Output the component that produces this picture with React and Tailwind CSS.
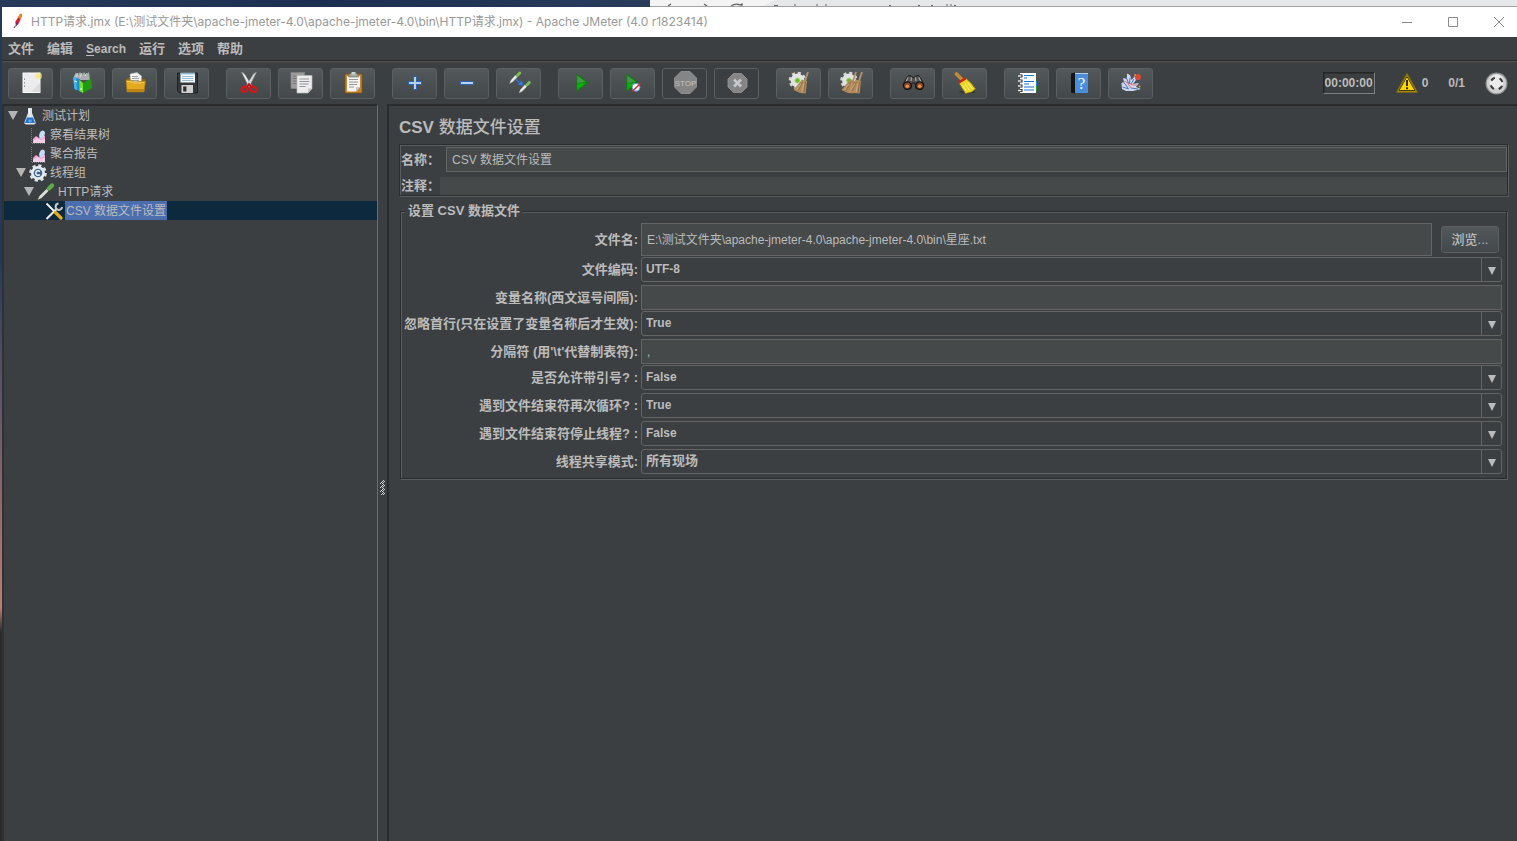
import { useState } from "react";

const Gear = ({ cx }) => (
  <g>
    <circle cx={cx} cy="9.5" r="7.5" fill="none" stroke="#d6d6d6" strokeWidth="2.6" strokeDasharray="3.1 2.79" />
    <circle cx={cx} cy="9.5" r="6.9" fill="#e2e2e2" />
    <circle cx={cx} cy="9.5" r="2.6" fill="#5fc417" stroke="#b9d7a2" />
  </g>
);

const Brush = ({ x }) => (
  <g transform={`translate(${x} 0)`}>
    <path d="M21 1 L18 10" stroke="#b3946a" strokeWidth="1.8" />
    <path d="M15 8.5 L20 10 L18.7 22.5 L13 22 L6.500 19 Z" fill="#b18a5d" />
    <path d="M15.500 11 L11 20 M18.5 11 L17 21.5" stroke="#80603a" strokeWidth=".7" />
    <path d="M14 13 L9.5 19 M17 12 L15 21" stroke="#d4b588" strokeWidth=".8" />
  </g>
);

const Dropper = () => (
  <g>
    <path d="M0 12 L1.500 8.500 L6.500 3 L8.500 5 L3 10.500 Z" fill="#eceeea" stroke="#8d938b" strokeWidth=".4" />
    <path d="M6 2.800 L9 5.800" stroke="#35522c" strokeWidth="1.2" />
    <path d="M7.800 4 L10.300 1.500" stroke="#7fbf5a" strokeWidth="2.8" strokeLinecap="round" />
  </g>
);

const icons = {
  new: (
    <>
      <rect x="4" y="2" width="17" height="19.5" fill="#ececec" stroke="#fafafa" />
      <path d="M5.5 7.5v1.5M5.5 11v1.5M5.5 14.5v1.5" stroke="#8a8a8a" />
      <path d="M12 21 L21 12 V21 Z" fill="#dcdcdc" />
      <circle cx="19.5" cy="5" r="3.6" fill="#f3e98a" opacity=".6" />
      <circle cx="19.5" cy="5" r="1.8" fill="#f7ec5c" />
    </>
  ),
  templates: (
    <>
      <path d="M3 5 L5 1.5 L7 4 L9 1 L11 4 L13 1 L15 4 L18 1 L19 9 H3 Z" fill="#a9adad" />
      <path d="M5 6 L7 2 M9 6 L11 2 M14 5 L16 2" stroke="#e9e9e9" strokeWidth=".9" />
      <path d="M2 6 L9 8 L10 21 L3.5 18 Z" fill="#1b8fd6" />
      <path d="M2 6 L5 7 L6 19 L3.5 18 Z" fill="#45b4ee" />
      <path d="M8.500 9 L12 12 L12 22 L8.5 20 Z" fill="#72e326" />
      <path d="M12 12 L20 7.5 L21 17 L12 22 Z" fill="#219a12" />
      <path d="M3.5 10 L6 11 M9.500 18 h1.6" stroke="#fff" strokeWidth="1.3" />
    </>
  ),
  open: (
    <>
      <path d="M3 8 L7 6 L22 8 L21 20 L5 20 Z" fill="#8b6510" />
      <path d="M7 3 L14 1.5 L18.5 5 L18 14 L8 13 Z" fill="#f3f3f3" stroke="#bdbdbd" strokeWidth=".5" />
      <path d="M9 5.5h6M9 7.5h7M9 9.5h7" stroke="#8b8b8b" strokeWidth=".8" />
      <path d="M3 9 L9 9.5 L11 11 L22.5 10 L21 21 L4 21 Z" fill="#e3a91f" stroke="#aa7a10" strokeWidth=".6" />
      <path d="M4 10.5 L9 10.8 L11 12.2 L21 11.5" stroke="#f6d06a" fill="none" />
      <path d="M4 18h17.3L21 21H4.2z" fill="#bf8413" />
    </>
  ),
  save: (
    <>
      <path d="M2.5 2h20v20H4.5l-2-2z" fill="#34373a" stroke="#191a1b" strokeWidth=".8" />
      <rect x="5.5" y="1.8" width="14.5" height="9.7" fill="#f5f8fb" />
      <rect x="5.5" y="1.8" width="14.5" height="1.6" fill="#8fb8d8" />
      <path d="M7 5.5h11.5M7 7.5h11.5M7 9.5h11.5" stroke="#7facd1" strokeWidth=".8" />
      <rect x="6.5" y="14" width="11.5" height="8" fill="#cfcfcf" />
      <rect x="8.2" y="15.5" width="3.2" height="5" fill="#2b2d2e" />
    </>
  ),
  cut: (
    <>
      <path d="M4.5 1 L7.500 3 L15 15 L12 16 Z" fill="#eeeeee" stroke="#9d9d9d" strokeWidth=".5" />
      <path d="M19.5 1 L16.500 3 L9 15 L12 16 Z" fill="#d9dada" stroke="#9d9d9d" strokeWidth=".5" />
      <ellipse cx="7.5" cy="18.3" rx="3.2" ry="2.4" fill="none" stroke="#d81616" strokeWidth="2.2" transform="rotate(-25 7.5 18.3)" />
      <ellipse cx="16.5" cy="18.3" rx="3.2" ry="2.4" fill="none" stroke="#d81616" strokeWidth="2.2" transform="rotate(25 16.5 18.3)" />
      <path d="M9.5 16 L12 13.5 L14.5 16" stroke="#c41212" strokeWidth="2.4" fill="none" />
    </>
  ),
  copy: (
    <>
      <rect x="2" y="1.5" width="13.5" height="16" fill="#9c9c9c" stroke="#858585" strokeWidth=".7" />
      <path d="M4 5h9M4 7.5h4M4 10h4M4 12.5h4" stroke="#727272" strokeWidth=".8" />
      <path d="M8 4.5h15v13L19 22H8z" fill="#ededed" stroke="#b9b9b9" strokeWidth=".7" />
      <path d="M10.5 8h9.5M10.5 10.5h10M10.5 13h9M10.5 15.5h6" stroke="#8e8e8e" strokeWidth=".9" />
      <path d="M19 22v-4.5h4z" fill="#c4c4c4" />
    </>
  ),
  paste: (
    <>
      <rect x="4" y="3" width="17" height="19" rx="1" fill="#c4882a" stroke="#7d5210" strokeWidth=".8" />
      <path d="M6 5h13v11l-4 4.5H6z" fill="#f5f5f5" />
      <path d="M15 20.5V16h4z" fill="#c3c3c3" />
      <path d="M8 8.5h9M8 11h9M8 13.5h8M8 16h5" stroke="#8b8b8b" strokeWidth=".9" />
      <path d="M8.5 2.5h8l1 3.5h-10z" fill="#a4a6a2" stroke="#5d5f5b" strokeWidth=".6" />
      <rect x="10.5" y="1" width="4" height="2.5" fill="#cfd1cd" />
    </>
  ),
  expand: (
    <>
      <path d="M12 5v14M5 12h14" stroke="#2f63ad" strokeWidth="4" />
      <path d="M12 6v12M6 12h12" stroke="#b4d2f3" strokeWidth="2" />
    </>
  ),
  collapse: (
    <>
      <path d="M5 12h14" stroke="#2f63ad" strokeWidth="4" />
      <path d="M6 12h12" stroke="#b4d2f3" strokeWidth="2" />
    </>
  ),
  toggle: (
    <>
      <g transform="translate(2.5 0.5)"><Dropper /></g>
      <g transform="translate(12 10)"><Dropper /></g>
      <path d="M9.5 8.500 L13 12" stroke="#2c7be8" strokeWidth="1.6" strokeDasharray="1.5 .7" />
      <path d="M16 14.500 L10.500 13.500 L15 9.500 Z" fill="#2c7be8" />
    </>
  ),
  start: (
    <>
      <path d="M7.5 2.5 L19.500 11.5 L7.5 21 Z" fill="#0a7f0a" />
      <path d="M8.2 4.5 L17 11 L8.2 12 Z" fill="#3f9a43" />
      <path d="M8.2 12.500 L17 12 L8.2 19 Z" fill="#08b408" />
    </>
  ),
  startNoPause: (
    <>
      <path d="M5.5 2.5 L17.5 11.5 L5.5 21 Z" fill="#0a7f0a" />
      <path d="M6.2 4.5 L15 11 L6.2 12 Z" fill="#3f9a43" />
      <path d="M6.2 12.500 L15 12 L6.2 19 Z" fill="#08b408" />
      <circle cx="15" cy="16.3" r="4" fill="#eef4ff" stroke="#5d8cc9" strokeWidth="1" />
      <path d="M11 20.500 L19.5 12.5" stroke="#d92b2b" strokeWidth="1.5" />
    </>
  ),
  stop: (
    <>
      <path d="M8 .5h9l6.5 6.5v9L17 22.5H8L1.5 16V7z" fill="#858585" stroke="#979797" strokeWidth=".8" />
      <text x="12.500" y="15" textAnchor="middle" fontSize="8" fill="#c2c2c2" fontFamily="Liberation Sans, sans-serif">STOP</text>
    </>
  ),
  shutdown: (
    <>
      <path d="M8.5 2.5h8l5.5 5.5v8l-5.5 5.5h-8L3 16V8z" fill="#858585" stroke="#979797" strokeWidth=".8" />
      <path d="M9 8.500l7 7M16 8.500l-7 7" stroke="#c8c8c8" strokeWidth="2.6" />
    </>
  ),
  clear: (
    <>
      <Gear cx="10.5" />
      <Brush x="0" />
    </>
  ),
  clearAll: (
    <>
      <Gear cx="10" />
      <Brush x="-4" />
      <Brush x="2" />
    </>
  ),
  search: (
    <>
      <path d="M5.500 7 L7.500 4.500 L10.500 5 L12.5 7 L14.500 5 L17.500 4.5 L19.500 7 L23 14 L20.500 18.500 L15 17.500 L14 12 H11 L10 17.500 L4.500 18.500 L2 14 Z" fill="#505050" stroke="#161616" strokeWidth=".9" />
      <path d="M7 6.500 L5 11 M18 6.500 L20 11 M10.500 6.500 L10 10 M14.500 6.500 L15 10" stroke="#ababab" strokeWidth="1.2" />
      <circle cx="6.3" cy="14.6" r="3.8" fill="#84451f" stroke="#111" strokeWidth="1.2" />
      <circle cx="18.7" cy="14.6" r="3.8" fill="#84451f" stroke="#111" strokeWidth="1.2" />
      <circle cx="6.3" cy="15.2" r="1.8" fill="#e0905f" />
      <circle cx="18.7" cy="15.2" r="1.8" fill="#e0905f" />
    </>
  ),
  resetSearch: (
    <>
      <ellipse cx="14" cy="21" rx="8" ry="1.5" fill="#33373a" />
      <path d="M3.500 3 L8.500 8" stroke="#c48a35" strokeWidth="3.600" strokeLinecap="round" />
      <path d="M6 12 L13 7.500 L18 12 L22.5 18 L18.500 21 L12.500 22.5 L9 17 Z" fill="#e8d520" stroke="#8c7b08" strokeWidth=".7" />
      <path d="M9.500 14 L13.500 20 M12 12.5 L16.500 19.500 M14.500 11.500 L19.500 18" stroke="#fff68e" strokeWidth="1" />
      <path d="M5.800 11.500 L12.5 7.500" stroke="#cf2018" strokeWidth="2.4" />
    </>
  ),
  functions: (
    <>
      <rect x="19" y="10" width="3" height="5" fill="#2274d8" />
      <rect x="19" y="15" width="3" height="5" fill="#1d9a1d" />
      <rect x="5" y="2" width="16" height="20" fill="#fbfbfb" />
      <path d="M5 3.5h2.500v3H5zM5 8.5h2.500v3H5zM5 13.5h2.500v3H5zM5 18h2.500v3H5z" fill="#1c1c1c" />
      <path d="M3 5h3.500M3 10h3.500M3 15h3.500M3 19.500h3.500" stroke="#e4e4e4" strokeWidth="1.5" />
      <path d="M9 4.5h10M9 7h3M9 10.500h10M9 13h5M9 16h10M9 19h10" stroke="#1f78e0" strokeWidth="1.1" />
    </>
  ),
  help: (
    <>
      <path d="M4 2.5 L8 1.5 V22.5 L4 21.5 Z" fill="#141414" />
      <rect x="8" y="2" width="13" height="20" fill="#4a8edb" />
      <rect x="8" y="2" width="13" height="1" fill="#a8cdf3" />
      <text x="14.5" y="18" textAnchor="middle" fontSize="17" fill="#f4f8ff" fontFamily="Liberation Serif, serif">?</text>
    </>
  ),
  undo: (
    <>
      <path d="M8 2.500 L11 4 L12.500 9 L16 5 L17 9 L14 13 L20 12 L17 16 L22 18 L14 20 L7 20 L3 18 L2.500 12 L5 11 L4 7 L8 8 Z" fill="#cdd9f0" />
      <path d="M7 6 L10 13 M11 7 L10.500 13 M4.500 11 L9 17 M3.500 16 L10 18 M12 17 L19 18 M15 8 L12 13" stroke="#4d74bd" strokeWidth="1" />
      <path d="M5.500 10 L9 12 L14 14 L18 14 M8 11 L12 17" stroke="#e0656d" strokeWidth=".9" fill="none" />
      <circle cx="19" cy="6" r="3.1" fill="#d34a35" />
      <circle cx="20.500" cy="15.500" r="1" fill="#e59a3c" />
      <circle cx="16" cy="4" r=".9" fill="#e59a3c" />
    </>
  ),
};

const toolbar = [
  [["new", "New"], ["templates", "Templates"], ["open", "Open"], ["save", "Save"]],
  [["cut", "Cut"], ["copy", "Copy"], ["paste", "Paste"]],
  [["expand", "Expand all"], ["collapse", "Collapse all"], ["toggle", "Toggle"]],
  [["start", "Start"], ["startNoPause", "Start no pauses"], ["stop", "Stop"], ["shutdown", "Shutdown"]],
  [["clear", "Clear"], ["clearAll", "Clear all"]],
  [["search", "Search"], ["resetSearch", "Reset search"]],
  [["functions", "Function helper"], ["help", "Help"], ["undo", "Undo"]],
];

const treeIcons = {
  flask: (
    <>
      <path d="M7 1h4v5l3.500 9q.5 2.500-2 2.500h-7q-2.500 0-2-2.500L7 6z" fill="#dde3ea" />
      <path d="M6 10.500 L12 10.500 L14 16 H4 Z" fill="#2471c8" />
      <circle cx="9" cy="14" r="1.800" fill="#5da5ec" />
      <path d="M8.500 2v5" stroke="#fff" />
    </>
  ),
  chart: (
    <>
      <path d="M4 16.500 V13 L7 10 L10 12 L13 9 L16 10 V16.500 Z" fill="#eda6d4" />
      <ellipse cx="13" cy="8.500" rx="2.600" ry="4" fill="#c5dcf5" transform="rotate(20 13 8.500)" />
      <path d="M4 15 L8 12 L12 14 L16 12.500 V17 H4 Z" fill="#f6cde8" />
      <path d="M2.5 2v15.500h14" stroke="#8d8d8d" strokeWidth=".8" strokeDasharray="1 1" fill="none" />
    </>
  ),
  group: (
    <>
      <circle cx="9" cy="9" r="7.500" fill="none" stroke="#dde2ea" strokeWidth="2.600" strokeDasharray="3.200 2.690" />
      <circle cx="9" cy="9" r="7" fill="#e6eaf0" />
      <circle cx="9" cy="9" r="4.300" fill="#3d6397" />
      <path d="M10.800 7.500a2.300 2.300 0 1 0 0 3" stroke="#fff" strokeWidth="1.400" fill="none" />
    </>
  ),
  dropper: (
    <>
      <path d="M0 17.500 L2 13 L10 5 L12.500 7.500 L4.500 15.500 Z" fill="#d4d9d4" stroke="#2e302e" strokeWidth=".7" />
      <path d="M8.500 4 L13.500 9" stroke="#2e4a27" strokeWidth="1.600" />
      <path d="M12 5.500 L15 2.500" stroke="#5faa4b" strokeWidth="4.200" strokeLinecap="round" />
    </>
  ),
  tools: (
    <>
      <path d="M1.500 17 L12 6.500" stroke="#e8e8e8" strokeWidth="2.200" />
      <path d="M13.500 1.500 A3.200 3.200 0 1 0 17 5" stroke="#c9c9c9" strokeWidth="2" fill="none" />
      <path d="M1.500 1.500 L10 10" stroke="#f3f3f3" strokeWidth="1.800" />
      <path d="M10.500 10.500 L16 16" stroke="#e5ac1c" strokeWidth="3.200" strokeLinecap="round" />
    </>
  ),
};

const tree = [
  { name: "测试计划", icon: "flask", open: true, pad: "pl-1" },
  { name: "察看结果树", icon: "chart", pad: "pl-3" },
  { name: "聚合报告", icon: "chart", pad: "pl-3" },
  { name: "线程组", icon: "group", open: true, pad: "pl-3" },
  { name: "HTTP请求", icon: "dropper", open: true, pad: "pl-5" },
  { name: "CSV 数据文件设置", icon: "tools", pad: "pl-7" },
];

const fields = [
  { id: "encoding", label: "文件编码:", value: "UTF-8", type: "select" },
  { id: "variables", label: "变量名称(西文逗号间隔):", value: "", type: "text" },
  { id: "ignoreFirst", label: "忽略首行(只在设置了变量名称后才生效):", value: "True", type: "select" },
  { id: "delimiter", label: "分隔符 (用'\\t'代替制表符):", value: ",", type: "text" },
  { id: "quoted", label: "是否允许带引号? :", value: "False", type: "select" },
  { id: "recycle", label: "遇到文件结束符再次循环? :", value: "True", type: "select" },
  { id: "stopThread", label: "遇到文件结束符停止线程? :", value: "False", type: "select" },
  { id: "shareMode", label: "线程共享模式:", value: "所有现场", type: "select" },
];

const options = {
  encoding: ["UTF-8", "UTF-16", "ISO-8859-15", "US-ASCII"],
  shareMode: ["所有现场", "当前线程组", "当前线程"],
};

function Triangle() {
  return (
    <svg width="10" height="9" viewBox="0 0 10 9" aria-hidden="true">
      <path d="M0 0h10L5 9z" fill="#b4b4b4" />
    </svg>
  );
}

function TitleBar() {
  return (
    <header className="flex h-[30px] items-center bg-white pr-3 pl-[9px]">
      <svg width="14" height="18" viewBox="0 0 14 18" aria-hidden="true">
        <path d="M9 1 Q11.500 0 10.500 4 L8 10 L5 13 L4.500 8.500 Z" fill="#d3232f" />
        <path d="M9 1 Q11.500 0 10.500 4 L9.500 6 L7 4.500 Z" fill="#f08a24" />
        <path d="M4.600 8.500 L7.500 10.500 L5 13 Z" fill="#7d2468" />
        <path d="M4.500 12.500 L3 15" stroke="#5c2a5c" />
      </svg>
      <h1 className="ml-[6px] flex-1 truncate font-[Inter,'Noto_Sans_CJK_SC',sans-serif] text-[12px] text-[#999999]">
        HTTP请求.jmx (E:\测试文件夹\apache-jmeter-4.0\apache-jmeter-4.0\bin\HTTP请求.jmx) - Apache JMeter (4.0 r1823414)
      </h1>
      <div className="flex gap-[35px]">
        <button aria-label="Minimize">
          <svg width="11" height="11" viewBox="0 0 11 11"><path d="M0 5.5h10" stroke="#8c8c8c" /></svg>
        </button>
        <button aria-label="Maximize">
          <svg width="11" height="11" viewBox="0 0 11 11"><path d="M.5.5h9v9h-9z" stroke="#8c8c8c" fill="none" /></svg>
        </button>
        <button aria-label="Close">
          <svg width="11" height="11" viewBox="0 0 11 11"><path d="M0 0l10 10M10 0L0 10" stroke="#8c8c8c" /></svg>
        </button>
      </div>
    </header>
  );
}

function MenuBar() {
  return (
    <nav className="flex h-[25px] items-center gap-[13px] border-b border-[#555351] pl-[6px] text-[13px] font-bold shadow-[inset_0_-1px_0_#282a2b]">
      <button>文件</button>
      <button>编辑</button>
      <button className="text-[12px]"><span className="underline underline-offset-2">S</span>earch</button>
      <button>运行</button>
      <button>选项</button>
      <button>帮助</button>
    </nav>
  );
}

function Toolbar() {
  return (
    <div className="flex h-[42px] items-center pr-[9px] pl-[6px]">
      <div className="flex gap-[17px]">
        {toolbar.map((group, i) => (
          <div key={i} className="flex gap-[7px]">
            {group.map(([icon, title]) => (
              <button
                key={icon}
                title={title}
                disabled={icon === "stop" || icon === "shutdown"}
                className="flex h-[31px] w-[45px] items-center justify-center rounded-[3px] border border-[#5c5f60] bg-linear-to-b from-[#53585a] to-[#43484a] disabled:bg-none"
              >
                <svg width="24" height="24" viewBox="0 0 24 24" fill="none" aria-hidden="true">{icons[icon]}</svg>
              </button>
            ))}
          </div>
        ))}
      </div>
      <div className="ml-auto flex items-center text-[12px] font-bold">
        <span className="border border-t-[#232526] border-r-[#7d8082] border-b-[#7d8082] border-l-[#232526] px-px leading-5 shadow-[inset_1px_1px_0_#2f3233]">00:00:00</span>
        <button className="ml-[21px] flex items-center gap-1" title="Warnings">
          <svg width="22" height="20" viewBox="0 0 22 20" aria-hidden="true">
            <path d="M11 1 L21 19 H1 Z" fill="#f5c800" stroke="#8a7304" strokeWidth="1.500" strokeLinejoin="round" />
            <path d="M11 3.500 L19 17.500 H3 Z" fill="#ffd500" stroke="#332c05" strokeWidth=".9" />
            <path d="M11 7v6M11 14.200v2" stroke="#1c1c1c" strokeWidth="1.800" />
          </svg>
          0
        </button>
        <span className="ml-5">0/1</span>
        <svg className="ml-5" width="23" height="23" viewBox="0 0 23 23" aria-hidden="true">
          <circle cx="11.5" cy="11.5" r="11" fill="#8f8f8f" />
          <circle cx="11.5" cy="11.5" r="9.800" fill="#d0d0d0" />
          <circle cx="11.5" cy="9.500" r="7" fill="#ececec" />
          <circle cx="11.5" cy="11.5" r="6" fill="none" stroke="#3c3e40" strokeWidth="2.200" strokeDasharray="4.400 5.025" strokeDashoffset="-2.500" />
        </svg>
      </div>
    </div>
  );
}

function Tree() {
  const [selected, setSelected] = useState("CSV 数据文件设置");

  return (
    <aside className="w-[376px] shrink-0 border-t-2 border-r border-l-2 border-t-[#2a2c2e] border-r-[#6b6e70] border-l-[#2f3234]">
      <ul className="text-[12px]">
        {tree.map((node) => (
          <li key={node.name} className={selected === node.name ? "bg-[#0d293e]" : ""}>
            <button
              onClick={() => setSelected(node.name)}
              className={`flex h-[19px] w-full items-center ${node.pad}`}
            >
              <span className="w-[10px]">{node.open && <Triangle />}</span>
              <svg className="mr-[2px] ml-[3px]" width="18" height="18" viewBox="0 0 18 18" fill="none" aria-hidden="true">
                {treeIcons[node.icon]}
              </svg>
              <span className={`h-[19px] px-px leading-[21px] ${selected === node.name ? "bg-[#4b6eaf]" : ""}`}>{node.name}</span>
            </button>
          </li>
        ))}
      </ul>
    </aside>
  );
}

function Field({ id, label, value, type }) {
  const [current, setCurrent] = useState(value);

  return (
    <div className={`flex items-center gap-[3px] ${type === "select" ? "mb-[3px]" : "mb-px"}`}>
      <label htmlFor={id} className="w-[237px] shrink-0 text-right whitespace-nowrap">{label}</label>
      {type === "select" ? (
        <div className="relative flex-1">
          <select
            id={id}
            value={current}
            onChange={(e) => setCurrent(e.target.value)}
            className={`block h-[25px] w-full appearance-none rounded-[3px] border border-[#646464] bg-[#3c3f41] pb-[2px] pl-1 font-bold ${id === "shareMode" ? "text-[13px]" : "text-[12px]"}`}
          >
            {(options[id] || ["True", "False"]).map((o) => (
              <option key={o}>{o}</option>
            ))}
          </select>
          <span className="pointer-events-none absolute inset-y-0 right-0 flex w-[21px] items-center justify-center border-l border-[#646464] pt-[2px]">
            <svg width="8" height="8" viewBox="0 0 8 8" aria-hidden="true"><path d="M0 0h8L4 8z" fill="#bbbbbb" /></svg>
          </span>
        </div>
      ) : (
        <input
          id={id}
          value={current}
          onChange={(e) => setCurrent(e.target.value)}
          className="h-[25px] flex-1 border border-[#646464] bg-[#45494a] px-[5px] text-[12px] font-normal"
        />
      )}
    </div>
  );
}

function CsvPanel() {
  return (
    <main className="min-w-0 flex-1 border-t-2 border-l-2 border-[#2a2c2e] pr-[9px] pl-[10px]">
      <h2 className="flex h-[38px] items-center pt-[6px] text-[17px] font-bold">CSV&nbsp;<span className="font-medium">数据文件设置</span></h2>
      <div className="border border-[#2b2d2f] pt-[2px] text-[13px] font-bold shadow-[1px_1px_0_#5a5d5f,inset_1px_1px_0_#5a5d5f]">
        <div className="flex items-center pl-px">
          <label htmlFor="name" className="w-[45px]">名称：</label>
          <input id="name" defaultValue="CSV 数据文件设置" className="h-[25px] min-w-0 flex-1 border border-[#646464] bg-[#45494a] px-[5px] pb-[2px] text-[12px] font-normal" />
        </div>
        <div className="mt-[5px] flex items-center pl-px">
          <label htmlFor="comment" className="w-[39px] leading-[18px]">注释：</label>
          <input id="comment" className="h-[18px] min-w-0 flex-1 bg-[#45494a] px-[5px] text-[12px] font-normal" />
        </div>
      </div>

      <fieldset className="mr-px ml-px mt-[7px] border border-[#2b2d2f] pt-1 pr-1 pb-px text-[13px] font-bold shadow-[1px_1px_0_#5a5d5f,inset_1px_1px_0_#5a5d5f]">
        <legend className="ml-1 bg-[#3c3f41] px-[3px] leading-4">设置 CSV 数据文件</legend>
        <div className="mb-px flex items-center gap-[3px]">
          <label htmlFor="filename" className="w-[237px] shrink-0 text-right">文件名:</label>
          <input
            id="filename"
            defaultValue="E:\测试文件夹\apache-jmeter-4.0\apache-jmeter-4.0\bin\星座.txt"
            className="h-[33px] min-w-0 flex-1 border border-[#646464] bg-[#45494a] px-[5px] pb-[2px] text-[12px] font-normal"
          />
          <button className="mr-[3px] ml-[6px] h-[27px] w-[58px] rounded-[3px] border border-[#5c5f60] bg-linear-to-b from-[#53585a] to-[#43484a] font-medium">浏览...</button>
        </div>
        {fields.map((field) => (
          <Field key={field.id} {...field} />
        ))}
      </fieldset>
    </main>
  );
}

function App() {
  return (
    <div className="flex min-h-screen flex-col bg-[#20314f] font-['Liberation_Sans','Noto_Sans_CJK_SC',sans-serif]">
      <div className="flex h-[7px]">
        <div className="w-[650px] bg-linear-to-r from-[#27395a] via-[#1c2f52] to-[#2a3c5c]" />
        <div className="flex-1 border-b border-[#a3a3a3] bg-[#e6e7e9]">
          <svg className="block" width="320" height="6" viewBox="0 0 320 6" aria-hidden="true">
            <path d="M0 0h125l-12 6H0z" fill="#f3f3f3" />
            <path d="M18 6l3-2M54 4l3 2M81 6q5-3 9-1l2-1v2" stroke="#5a5a5a" strokeWidth="1.200" fill="none" />
            <path d="M124 5.500h4M144 5h2M166 5h2M175 5h2M239 5.500h2M268 5.500h2M281 5.500h2M296 5h2M300 5h2M304 5.500h2" stroke="#5e6266" />
          </svg>
        </div>
      </div>
      <div className="flex flex-1">
        <div className="w-[2px] bg-linear-to-b from-[#24385a] from-30% via-[#c07c70] via-72% to-[#2b2a2a] to-75%" />
        <div className="flex min-w-0 flex-1 flex-col bg-[#3c3f41] text-[#bbbbbb]">
          <TitleBar />
          <MenuBar />
          <Toolbar />
          <div className="flex flex-1">
            <Tree />
            <div className="flex w-[9px] shrink-0 items-center justify-center pt-[30px]">
              <svg width="5" height="15" viewBox="0 0 5 15" shapeRendering="crispEdges" aria-hidden="true">
                <path d="M3.500 0v15" stroke="#d0d0d0" strokeDasharray="1 3" />
                <path d="M2.500 1v14M4.500 1v14" stroke="#d0d0d0" strokeDasharray="1 3" />
                <path d="M1.500 2v13M3.500 2v13" stroke="#d0d0d0" strokeDasharray="1 3" />
                <path d="M.5 3v12M2.500 3v12" stroke="#d0d0d0" strokeDasharray="1 3" />
              </svg>
            </div>
            <CsvPanel />
          </div>
        </div>
      </div>
    </div>
  );
}

export default App;
